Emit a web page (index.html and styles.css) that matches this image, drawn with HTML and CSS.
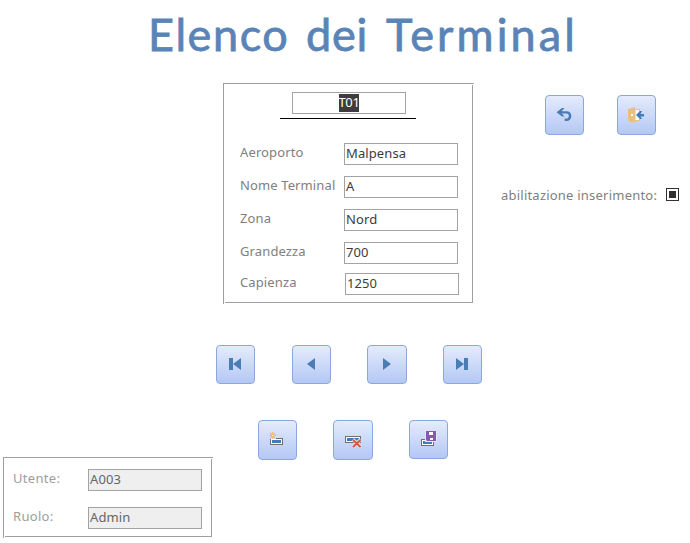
FILE: index.html
```html
<!DOCTYPE html>
<html lang="it">
<head>
<meta charset="utf-8">
<title>Elenco dei Terminal</title>
<link rel="stylesheet" href="styles.css">
</head>
<body>
<h1 class="title"><span class="w-elenco">Elenco</span><span class="w-dei">dei</span><span class="w-terminal">Terminal</span></h1>
<main class="content">
  <section class="panel detail">
    <div class="panel-inner">
      <div class="code field"><span class="selected">T01</span></div>
      <hr class="rule">
      <div class="row r1"><label>Aeroporto</label><div class="field">Malpensa</div></div>
      <div class="row r2"><label>Nome Terminal</label><div class="field">A</div></div>
      <div class="row r3"><label>Zona</label><div class="field">Nord</div></div>
      <div class="row r4"><label>Grandezza</label><div class="field">700</div></div>
      <div class="row r5"><label>Capienza</label><div class="field">1250</div></div>
    </div>
  </section>
  <aside class="side">
    <div class="actions">
      <button class="btn tall" aria-label="Annulla"><svg width="38" height="40" viewBox="0 0 38 40"><path d="M10.500 16.200L16 12h2.500l-2.800 3.200h5c2.800 0 4.600 1.800 4.600 4.700s-2 5.100-5 5.100h-1.600v-2.400h1.400c1.700 0 2.700-1 2.700-2.600s-1-2.400-2.600-2.400h-4.400l2.700 3h-2.500z" fill="#4a7db3"/></svg></button>
      <button class="btn tall" aria-label="Chiudi"><svg width="38" height="40" viewBox="0 0 38 40"><path d="M17 13.500h4.500v11H17z" fill="#fff" stroke="#e8c080"/><path d="M10 13l7-2v16l-7-2z" fill="#e8c080"/><path d="M13 18h2v2h-2z" fill="#fff"/><path d="M18 19l4-4h2l-1.500 3H26v2.500h-3.500L24 23h-2z" fill="#417cb8"/></svg></button>
    </div>
    <div class="enable"><span>abilitazione inserimento:</span><i class="check"></i></div>
  </aside>
</main>
<nav class="nav">
  <button class="btn" aria-label="Primo"><svg width="37" height="37" viewBox="0 0 37 37"><path d="M12 12h4v12h-4zM24 12v12l-8-6z" fill="#4a7db3"/></svg></button>
  <button class="btn" aria-label="Precedente"><svg width="37" height="37" viewBox="0 0 37 37"><path d="M22 12v12l-8-6z" fill="#4a7db3"/></svg></button>
  <button class="btn wide" aria-label="Successivo"><svg width="37" height="37" viewBox="0 0 37 37"><path d="M15 12v12l8-6z" fill="#4a7db3"/></svg></button>
  <button class="btn" aria-label="Ultimo"><svg width="37" height="37" viewBox="0 0 37 37"><path d="M12 12v12l8-6zM20 12h4v12h-4z" fill="#4a7db3"/></svg></button>
</nav>
<div class="records">
  <button class="btn tall" aria-label="Nuovo"><svg width="37" height="38" viewBox="0 0 37 38"><path d="M11 17h13v7H11z" fill="#707070"/><path d="M12 18h11v5H12z" fill="#fff"/><path d="M13 19h9v3h-9z" fill="#417cb8"/><path d="M10 11h7v7h-7z" fill="#d4e0f8"/><path d="M13.500 11v7M10 14.500h7M11 12l5 5M16 12l-5 5" stroke="#e8bd78" stroke-width="1.200"/><path d="M13 14h1v1h-1z" fill="#fff"/></svg></button>
  <button class="btn tall wide" aria-label="Elimina"><svg width="38" height="38" viewBox="0 0 38 38"><path d="M11 15h16v7H11z" fill="#707070"/><path d="M12 16h14v5H12z" fill="#fff"/><path d="M13 17h12v3H13z" fill="#417cb8"/><path d="M19 18.500l7.500 7.500M26.500 18.500L19 26" stroke="#dce5fa" stroke-width="3.500"/><path d="M19 19l7.500 7M26.500 19L19 26" stroke="#d9583b" stroke-width="2"/></svg></button>
  <button class="btn" aria-label="Salva"><svg width="37" height="37" viewBox="0 0 37 37"><path d="M11 18h13v7H11z" fill="#707070"/><path d="M12 19h11v5H12z" fill="#fff"/><path d="M13 20h9v3h-9z" fill="#417cb8"/><path d="M15 10h12v11H15z" fill="#e2e8fb"/><path d="M16 10h10v10H17l-1-1z" fill="#8859b0"/><path d="M19 11h4v3h-4zM20 17h3v2h-3z" fill="#fff"/></svg></button>
</div>
<section class="panel user">
  <div class="panel-inner">
    <div class="row u1"><label>Utente:</label><div class="field">A003</div></div>
    <div class="row u2"><label>Ruolo:</label><div class="field">Admin</div></div>
  </div>
</section>
</body>
</html>
```
FILE: styles.css
```css
* { box-sizing: border-box; }
html { background: #fff; }
body {
  margin: 0;
  width: 690px;
  height: 543px;
  overflow: hidden;
  font: 13px/20px "Noto Sans", sans-serif;
  color: #3c3c3c;
}
.title {
  margin: 0;
  height: 83px;
  padding: 3px 0 0 148px;
  display: flex;
  font: 400 45px/62px Lato, sans-serif;
  color: #5a84b8;
  -webkit-text-stroke: 0.8px #5a84b8;
  white-space: nowrap;
}
.w-elenco { width: 158px; letter-spacing: 1.6px; }
.w-dei { width: 80px; letter-spacing: 0.8px; }
.w-terminal { letter-spacing: 3.1px; }
.content { display: flex; height: 262px; padding-left: 223px; }
.panel { border: solid #9f9f9f; border-width: 1px 0 0 1px; }
.panel-inner {
  height: calc(100% - 2px);
  margin: 1px;
  border: solid #9f9f9f;
  border-width: 0 1px 1px 0;
}
.detail { width: 251px; height: 221px; }
.detail .panel-inner { padding: 7px 0 0 15px; }
.field {
  width: 114px;
  height: 22px;
  padding: 0 1px;
  border: 1px solid #a3a3a3;
  background: #fff;
  line-height: 18px;
  letter-spacing: 0.1px;
}
.code { margin-left: 52px; text-align: center; }
.selected { display: inline-block; height: 18px; line-height: 17px; margin-top: 0; background: #3d3d3d; color: #fff; letter-spacing: -0.4px; }
.rule { width: 136px; height: 1px; margin: 4px 0 24px 40px; border: 0; background: #000; }
.row { display: flex; }
.row label { width: 104px; line-height: 19px; color: #808080; white-space: nowrap; letter-spacing: 0.12px; }
.r1, .r2, .r3 { height: 33px; }
.r4 { height: 31px; }
.r5 label { width: 105px; }
.side { margin-left: 27px; padding-top: 12px; }
.actions { display: flex; gap: 33px; padding-left: 44px; }
.btn {
  display: flex;
  flex: none;
  width: 39px;
  height: 39px;
  padding: 0;
  border: 1px solid #8aa8de;
  border-radius: 4px;
  background: linear-gradient(#e4ebfb, #b4c8f5);
}
.btn svg { display: block; flex: none; }
.tall { height: 40px; }
.wide { width: 40px; }
.enable { display: flex; margin-top: 50px; width: 178px; justify-content: space-between; color: #808080; white-space: nowrap; letter-spacing: 0.22px; }
.check { width: 13px; height: 13px; margin-top: 3px; border: 1px solid #303030; box-shadow: inset 0 0 0 2px #fff; background: #303030; }
.nav { display: flex; height: 75px; padding-left: 216px; gap: 36px; }
.nav .btn:first-child { margin-right: 1px; }
.records { display: flex; height: 37px; padding-left: 258px; gap: 36px; align-items: flex-start; }
.user { width: 210px; height: 81px; margin-left: 3px; }
.user .panel-inner { padding: 10px 0 0 8px; }
.user label { width: 75px; color: #9d9d9d; letter-spacing: 0.3px; }
.user .field { background: #efefef; color: #666; }
.u1 { height: 38px; }
```
